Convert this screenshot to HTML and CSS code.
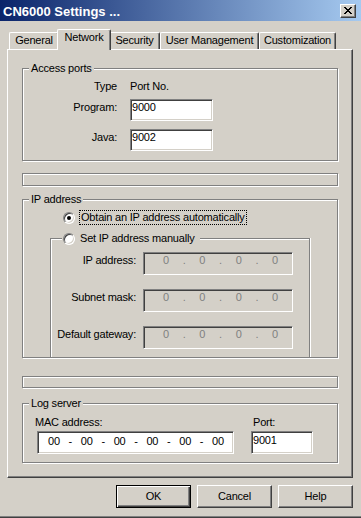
FILE: index.html
```html
<!DOCTYPE html>
<html>
<head>
<meta charset="utf-8">
<title>CN6000 Settings</title>
<link rel="stylesheet" href="styles.css">
</head>
<body>
<div class="window">
  <div class="titlebar">
    <span class="title">CN6000 Settings ...</span>
    <button class="close" aria-label="Close">
      <svg width="8" height="7" viewBox="0 0 8 7" shape-rendering="crispEdges"><path fill="#000" d="M0 0h2v1H0z M6 0h2v1H6z M1 1h2v1H1z M5 1h2v1H5z M2 2h4v1H2z M3 3h2v1H3z M2 4h4v1H2z M1 5h2v1H1z M5 5h2v1H5z M0 6h2v1H0z M6 6h2v1H6z"/></svg>
    </button>
  </div>

  <div class="tabs">
    <div class="tab t-general">General</div>
    <div class="tab t-network active">Network</div>
    <div class="tab t-security">Security</div>
    <div class="tab t-user">User Management</div>
    <div class="tab t-custom">Customization</div>
  </div>

  <div class="panel">
    <div class="group access">
      <div class="legend">Access ports</div>
      <div class="row head"><span class="lbl">Type</span><span>Port No.</span></div>
      <div class="row prog"><span class="lbl">Program:</span><div class="edit port-edit">9000</div></div>
      <div class="row java"><span class="lbl">Java:</span><div class="edit port-edit">9002</div></div>
    </div>

    <div class="group frame1"></div>

    <div class="group ip">
      <div class="legend">IP address</div>
      <div class="radio-row">
        <span class="radio checked"></span><span class="focus">Obtain an IP address automatically</span>
      </div>
      <div class="inner">
        <div class="legend radio-legend"><span class="radio"></span><span>Set IP address manually</span></div>
        <div class="iprow first"><span class="iplbl">IP address:</span><div class="ipfield"><span>0</span><span>.</span><span>0</span><span>.</span><span>0</span><span>.</span><span>0</span></div></div>
        <div class="iprow"><span class="iplbl">Subnet mask:</span><div class="ipfield"><span>0</span><span>.</span><span>0</span><span>.</span><span>0</span><span>.</span><span>0</span></div></div>
        <div class="iprow"><span class="iplbl">Default gateway:</span><div class="ipfield"><span>0</span><span>.</span><span>0</span><span>.</span><span>0</span><span>.</span><span>0</span></div></div>
      </div>
    </div>

    <div class="group frame2"></div>

    <div class="group log">
      <div class="legend">Log server</div>
      <div class="logrow">
        <div class="mac">
          <span class="collbl">MAC address:</span>
          <div class="edit macfield"><span>00</span><span>-</span><span>00</span><span>-</span><span>00</span><span>-</span><span>00</span><span>-</span><span>00</span><span>-</span><span>00</span></div>
        </div>
        <div class="portcol">
          <span class="collbl">Port:</span>
          <div class="edit portfield">9001</div>
        </div>
      </div>
    </div>
  </div>

  <div class="buttons">
    <button class="btn default">OK</button>
    <button class="btn">Cancel</button>
    <button class="btn">Help</button>
  </div>
</div>
</body>
</html>
```

FILE: styles.css
```css
* { box-sizing: border-box; }

html, body {
  margin: 0;
  padding: 0;
}

body {
  background: #d4d0c8;
  font: 11px/13px "Liberation Sans", Arial, sans-serif;
  letter-spacing: -0.2px;
  color: #000;
}

.window {
  width: 361px;
  height: 518px;
  display: flex;
  flex-direction: column;
  overflow: hidden;
  border-bottom: 1px solid #404040;
  box-shadow: inset 0 -1px 0 #808080;
}

/* title bar */
.titlebar {
  height: 21px;
  flex: none;
  display: flex;
  align-items: flex-start;
  background: linear-gradient(to right, #0a246a, #a6caf0);
}

.title {
  color: #fff;
  font: bold 13px/15px "Liberation Sans", Arial, sans-serif;
  letter-spacing: 0;
  padding: 4px 0 0 3px;
}

.close {
  margin: 4px 5px 0 auto;
  width: 16px;
  height: 14px;
  padding: 2px 0 0 3px;
  display: flex;
  align-items: flex-start;
  background: #d4d0c8;
  border: 1px solid;
  border-color: #fff #404040 #404040 #fff;
  box-shadow: inset -1px -1px 0 #808080;
}

.close svg { display: block; }

/* tabs */
.tabs {
  display: flex;
  align-items: flex-start;
  height: 20px;
  margin-top: 8px;
  padding-left: 9px;
  position: relative;
  z-index: 1;
  flex: none;
}

.tab {
  height: 17px;
  margin-top: 3px;
  padding-top: 1px;
  text-align: center;
  background: #d4d0c8;
  border: 1px solid;
  border-bottom: 0;
  border-color: #fff #404040 #fff #fff;
  border-radius: 2px 2px 0 0;
  box-shadow: inset -1px 0 0 #808080;
  white-space: nowrap;
}

.tab.active {
  height: 21px;
  margin: 0 -2px;
  position: relative;
  z-index: 2;
}

.t-general { width: 50px; }
.t-network { width: 54px; }
.t-security { width: 51px; }
.t-user { width: 99px; }
.t-custom { width: 77px; }

/* panel */
.panel {
  margin-left: 7px;
  width: 346px;
  height: 429px;
  flex: none;
  border: 1px solid;
  border-color: #fff #404040 #404040 #fff;
  box-shadow: inset -1px -1px 0 #808080;
  padding: 18px 0 0 14px;
  display: flex;
  flex-direction: column;
}

.group {
  width: 316px;
  flex: none;
  border: 1px solid #808080;
  box-shadow: 1px 1px 0 #fff, inset 1px 1px 0 #fff;
  display: flex;
  flex-direction: column;
}

.legend {
  align-self: flex-start;
  height: 13px;
  margin: -7px 0 0 6px;
  padding: 0 2px;
  background: #d4d0c8;
  white-space: nowrap;
}

/* access ports */
.access { height: 93px; }

.row {
  display: flex;
  align-items: baseline;
}

.row .lbl {
  width: 94px;
  margin-right: 13px;
  text-align: right;
}

.row.head { margin-top: 5px; }
.row.prog { margin-top: 6px; }
.row.java { margin-top: 8px; }

.edit {
  background: #fff;
  border: 1px solid;
  border-color: #808080 #fff #fff #808080;
  box-shadow: inset 1px 1px 0 #404040, inset -1px -1px 0 #d4d0c8;
}

.port-edit {
  width: 83px;
  height: 22px;
  padding: 1px 0 0 1px;
}

.frame1 { height: 13px; margin-top: 12px; }
.frame2 { height: 12px; margin-top: 18px; }

/* ip address */
.ip {
  height: 159px;
  margin-top: 13px;
}

.radio-row {
  display: flex;
  align-items: center;
  margin-top: 4px;
  padding-left: 40px;
  gap: 4px;
}

.radio {
  flex: none;
  position: relative;
  width: 12px;
  height: 12px;
  border-radius: 50%;
  background: #fff;
  border: 1px solid;
  border-color: #808080 #fff #fff #808080;
  box-shadow: inset 1px 1px 0 #404040, inset -1px -1px 0 #d4d0c8;
}

.radio.checked::after {
  content: "";
  position: absolute;
  left: 3px;
  top: 3px;
  width: 4px;
  height: 4px;
  border-radius: 50%;
  background: #000;
}

.focus {
  border: 1px dotted #000;
  padding: 0 1px;
  line-height: 13px;
  white-space: nowrap;
}

.inner {
  flex: 1;
  width: 260px;
  margin: 13px 0 0 27px;
  border: 1px solid #808080;
  border-bottom: 0;
  box-shadow: 1px 0 0 #fff, inset 1px 1px 0 #fff;
  display: flex;
  flex-direction: column;
}

.radio-legend {
  display: flex;
  align-items: center;
  gap: 5px;
  margin: -7px 0 0 11px;
  padding: 0 6px 0 1px;
}

.iprow {
  display: flex;
  align-items: baseline;
  margin-top: 14px;
}

.iprow.first { margin-top: 7px; }

.iplbl {
  width: 85px;
  margin-right: 7px;
  text-align: right;
  white-space: nowrap;
}

.ipfield {
  width: 150px;
  height: 23px;
  display: flex;
  justify-content: space-between;
  padding: 1px 14px 0 19px;
  color: #808080;
  background: #d4d0c8;
  border: 1px solid;
  border-color: #808080 #fff #fff #808080;
  box-shadow: inset 1px 1px 0 #404040, inset -1px -1px 0 #d4d0c8;
}

/* log server */
.log {
  height: 60px;
  margin-top: 15px;
}

.logrow {
  display: flex;
  margin-top: 6px;
}

.mac {
  display: flex;
  flex-direction: column;
  margin-left: 12px;
}

.macfield {
  width: 197px;
  height: 23px;
  margin: 2px 0 0 2px;
  display: flex;
  justify-content: space-between;
  padding: 3px 9px 0 10px;
}

.portcol {
  display: flex;
  flex-direction: column;
  margin-left: 17px;
}

.portcol .collbl { padding-left: 2px; }

.portfield {
  width: 62px;
  height: 23px;
  margin-top: 2px;
  padding: 2px 0 0 1px;
}

/* buttons */
.buttons {
  display: flex;
  justify-content: flex-end;
  gap: 6px;
  margin-top: 7px;
  padding-right: 8px;
  flex: none;
}

.btn {
  width: 75px;
  height: 23px;
  padding: 0;
  font: inherit;
  letter-spacing: inherit;
  color: #000;
  background: #d4d0c8;
  border: 1px solid;
  border-color: #fff #404040 #404040 #fff;
  box-shadow: inset -1px -1px 0 #808080;
}

.btn.default {
  border-color: #000;
  box-shadow: inset 1px 1px 0 #fff, inset -1px -1px 0 #404040, inset -2px -2px 0 #808080;
}
```
